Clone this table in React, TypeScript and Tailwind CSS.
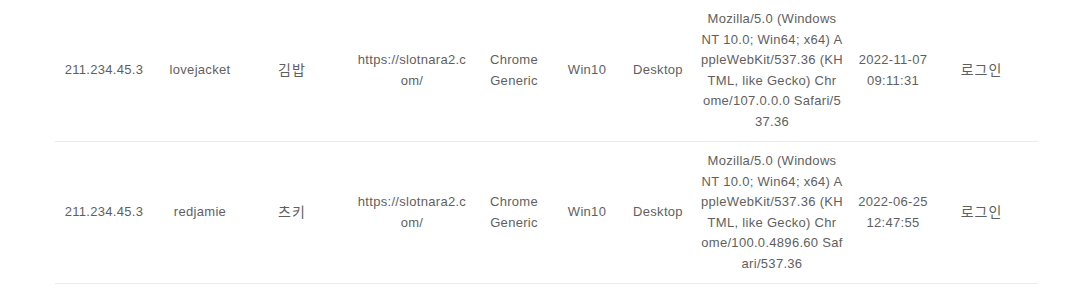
import React from "react";

type Row = {
  ip: string;
  user: string;
  nick: string;
  url: string[];
  browser: string[];
  os: string;
  device: string;
  ua: string[];
  date: string[];
  action: string;
};

const rows: Row[] = [
  {
    ip: "211.234.45.3",
    user: "lovejacket",
    nick: "김밥",
    url: ["https://slotnara2.c", "om/"],
    browser: ["Chrome", "Generic"],
    os: "Win10",
    device: "Desktop",
    ua: [
      "Mozilla/5.0 (Windows",
      "NT 10.0; Win64; x64) A",
      "ppleWebKit/537.36 (KH",
      "TML, like Gecko) Chr",
      "ome/107.0.0.0 Safari/5",
      "37.36",
    ],
    date: ["2022-11-07", "09:11:31"],
    action: "로그인",
  },
  {
    ip: "211.234.45.3",
    user: "redjamie",
    nick: "츠키",
    url: ["https://slotnara2.c", "om/"],
    browser: ["Chrome", "Generic"],
    os: "Win10",
    device: "Desktop",
    ua: [
      "Mozilla/5.0 (Windows",
      "NT 10.0; Win64; x64) A",
      "ppleWebKit/537.36 (KH",
      "TML, like Gecko) Chr",
      "ome/100.0.4896.60 Saf",
      "ari/537.36",
    ],
    date: ["2022-06-25", "12:47:55"],
    action: "로그인",
  },
];

function Cell({ lines, ko }: { lines: string[]; ko?: boolean }) {
  return (
    <div
      className={
        ko
          ? "flex flex-col items-center justify-center whitespace-nowrap text-[14px] tracking-[1px]"
          : "flex flex-col items-center justify-center whitespace-nowrap"
      }
    >
      {lines.map((l, i) => (
        <span key={i}>{l}</span>
      ))}
    </div>
  );
}

export default function App() {
  return (
    <div className="w-[1080px] h-[291px] overflow-hidden bg-white">
      <div
        className="ml-[55px] w-[983px] text-[13px] leading-[20.5px] tracking-[0.3px] text-[#5f5f5f]"
        style={{ fontFamily: '"Liberation Sans", "Noto Sans CJK KR", sans-serif' }}
      >
        {rows.map((r, i) => (
          <div
            key={i}
            className="grid grid-cols-[98px_94px_90px_150px_54px_92px_50px_178px_64px_113px] py-[9px] border-b border-[#ebebeb]"
          >
            <Cell lines={[r.ip]} />
            <Cell lines={[r.user]} />
            <Cell lines={[r.nick]} ko />
            <Cell lines={r.url} />
            <Cell lines={r.browser} />
            <Cell lines={[r.os]} />
            <Cell lines={[r.device]} />
            <Cell lines={r.ua} />
            <Cell lines={r.date} />
            <Cell lines={[r.action]} ko />
          </div>
        ))}
      </div>
    </div>
  );
}
